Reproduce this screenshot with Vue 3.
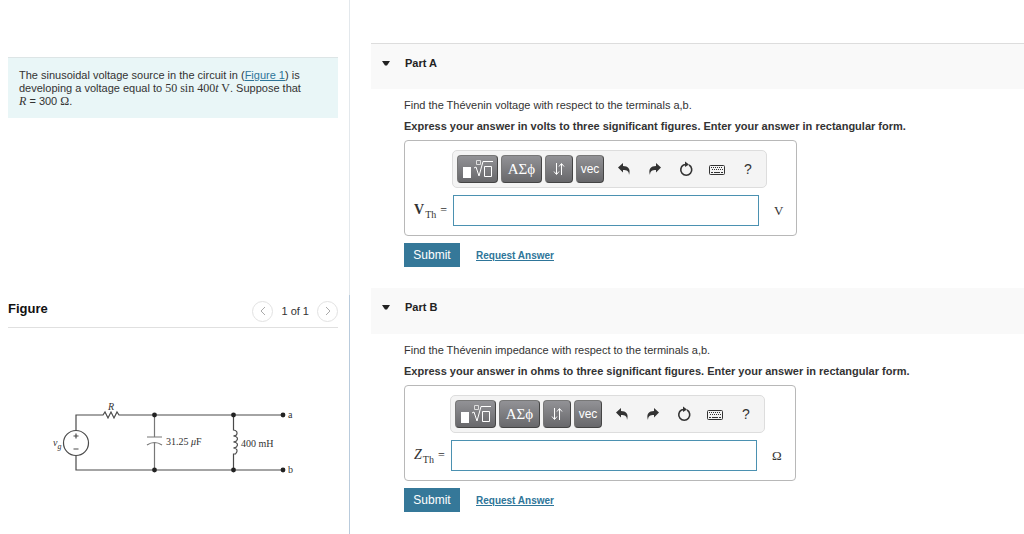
<script setup>
import { ref } from 'vue'

const parts = ref([
  {
    id: 'a', title: 'Part A', quantity: 'voltage', unitName: 'volts',
    symbol: 'V', vector: true, unit: 'V', answer: '', open: true
  },
  {
    id: 'b', title: 'Part B', quantity: 'impedance', unitName: 'ohms',
    symbol: 'Z', vector: false, unit: 'Ω', answer: '', open: true
  }
])
</script>

<template>
  <div class="page">
    <aside class="side">
      <section class="intro">
        <p>
          The sinusoidal voltage source in the circuit in (<a href="#figure">Figure 1</a>) is
          developing a voltage equal to <span class="math">50 sin 400<i>t</i> V</span>. Suppose that
          <span class="math"><i>R</i></span> = 300 <span class="math">Ω</span>.
        </p>
      </section>

      <section id="figure" class="figure">
        <header class="figure-head">
          <h2>Figure</h2>
          <nav class="pager" aria-label="Figures">
            <button type="button" aria-label="Previous figure">
              <svg width="8" height="10" viewBox="0 0 8 10"><path d="M6 1 2 5l4 4" /></svg>
            </button>
            <span>1 of 1</span>
            <button type="button" aria-label="Next figure">
              <svg width="8" height="10" viewBox="0 0 8 10"><path d="M2 1l4 4-4 4" /></svg>
            </button>
          </nav>
        </header>
        <svg class="circuit" width="250" height="84" viewBox="0 0 250 84" role="img" aria-label="Circuit diagram">
          <g fill="none" stroke="#4a4a4a" stroke-width="1.2">
            <path d="M26 34V18H53l2-3 3 6 3-6 3 6 3-6 2 3H233" />
            <path d="M26 59V73H233" />
            <circle cx="26" cy="46" r="12.5" />
            <path d="M23.500 39h5M26 36.500v5M23.500 52h5" />
            <path d="M104.500 18V40M97 40h15M97 48q7.500-5 15 0M104.500 46V73" stroke="#777" />
            <path d="M183.500 18V33q5 1 3 5l-3 1q6 1 3 5l-3 1q6 1 3 5l-3 1q6 1 2 6h-2V73" />
          </g>
          <g fill="#222">
            <circle cx="104.500" cy="18" r="2.400" /><circle cx="104.500" cy="73" r="2.400" />
            <circle cx="183.500" cy="18" r="2.400" /><circle cx="183.500" cy="73" r="2.400" />
            <circle cx="233" cy="18" r="2.400" /><circle cx="233" cy="73" r="2.400" />
          </g>
          <g class="circuit-text">
            <text x="58" y="13" font-style="italic">R</text>
            <text x="3" y="49" font-style="italic">v<tspan dy="3" font-size="8">g</tspan></text>
            <text x="116" y="48">31.25 <tspan font-style="italic">μ</tspan>F</text>
            <text x="191" y="50">400 mH</text>
            <text x="238" y="21">a</text>
            <text x="238" y="76">b</text>
          </g>
        </svg>
      </section>
    </aside>

    <main class="main">
      <section v-for="part in parts" :key="part.id" class="part">
        <header class="part-head">
          <button type="button" :aria-expanded="part.open" :aria-label="part.title" @click="part.open = !part.open">
            <svg width="8" height="5" viewBox="0 0 8 5"><path d="M0 0h8L5 4.500H3z" fill="#222" /></svg>
          </button>
          <h2>{{ part.title }}</h2>
        </header>
        <div v-if="part.open" class="part-body">
          <p>Find the Thévenin {{ part.quantity }} with respect to the terminals a,b.</p>
          <p class="strong">
            Express your answer in {{ part.unitName }} to three significant figures. Enter your answer in rectangular form.
          </p>
          <div class="answer">
            <div class="toolbar">
              <button type="button" class="key wide" aria-label="Templates">
                <svg width="32" height="20" viewBox="0 0 32 20" fill="none" stroke="#fff">
                  <path d="M1 8h8v11H1z" fill="#fff" stroke="none" />
                  <path d="M14.500 1.500h4v4h-4z" stroke="#ddd" />
                  <path d="M12 9l2-1 3 9 4-14.500h10" />
                  <path d="M22.500 7.500h7v10h-7z" />
                </svg>
              </button>
              <button type="button" class="key wide greek">ΑΣϕ</button>
              <button type="button" class="key" aria-label="Subscript and superscript">
                <svg width="12" height="14" viewBox="0 0 12 14" fill="none" stroke="#fff">
                  <path d="M3.500 1v11M1 9.500l2.500 3 2.500-3M8.500 13V2M6 4.500l2.500-3 2.500 3" />
                </svg>
              </button>
              <button type="button" class="key">vec</button>
              <button type="button" class="tool" aria-label="Undo">
                <svg width="14" height="14" viewBox="0 0 14 14">
                  <path d="M1 5.500 6 1v3c5 0 8 3 6 9 0-4-2-5-6-5v2.500z" fill="#333" />
                </svg>
              </button>
              <button type="button" class="tool" aria-label="Redo">
                <svg width="14" height="14" viewBox="0 0 14 14">
                  <path d="M13 5.500 8 1v3c-5 0-8 3-6 9 0-4 2-5 6-5v2.500z" fill="#333" />
                </svg>
              </button>
              <button type="button" class="tool" aria-label="Reset">
                <svg width="14" height="16" viewBox="0 0 14 16">
                  <path d="M10 4a5.500 5.500 0 1 1-5.500 0L7 3.500" fill="none" stroke="#333" stroke-width="1.600" />
                  <path d="M6 0.500 10 3.500 6 6z" fill="#333" />
                </svg>
              </button>
              <button type="button" class="tool" aria-label="Keyboard">
                <svg width="16" height="14" viewBox="0 0 16 14" fill="none" stroke="#333">
                  <rect x="0.500" y="3.500" width="15" height="9" rx="1" />
                  <path d="M2 5.500h12M3 7.500h11" stroke-dasharray="1 1" />
                  <path d="M2 10.500h2M5 10.500h6M12 10.500h2" />
                </svg>
              </button>
              <button type="button" class="tool help" aria-label="Help">?</button>
            </div>
            <label :for="'answer-' + part.id" class="symbol" :class="{ vector: part.vector }">
              <span class="letter">{{ part.symbol }}</span><span class="sub">Th</span><span class="eq">=</span>
            </label>
            <input :id="'answer-' + part.id" v-model="part.answer" type="text" class="field" autocomplete="off" />
            <span class="unit">{{ part.unit }}</span>
          </div>
          <div class="actions">
            <button type="button" class="submit">Submit</button>
            <a href="#request">Request Answer</a>
          </div>
        </div>
      </section>
    </main>
  </div>
</template>

<style>
body {
  background: #fff;
}
</style>

<style scoped>
.page {
  display: grid;
  grid-template-columns: minmax(0, 350px) minmax(0, 1fr);
  min-height: 100vh;
  color: #333;
  font: 11px/13px "Liberation Sans", Arial, sans-serif;
}
h2, p {
  margin: 0;
}
button {
  display: flex;
  align-items: center;
  justify-content: center;
  padding: 0;
  border: 0;
  background: none;
  color: inherit;
  font: inherit;
  cursor: pointer;
}
a {
  color: #2e7599;
}
.side {
  display: grid;
  grid-template-rows: 295px 1fr;
}
.intro {
  padding: 57px 11px 0 8px;
  border-right: 1px solid #e3e8ec;
}
.intro p {
  padding: 11px 30px 10px 11px;
  border-top: 1px solid #dde5e6;
  background: #e9f6f7;
}
.math {
  font: 12px/12px "Liberation Serif", serif;
}
.figure {
  padding: 0 11px 0 8px;
  border-right: 1px solid #b9cbdc;
}
.figure-head {
  display: flex;
  align-items: center;
  justify-content: space-between;
  height: 32px;
  border-bottom: 1px solid #e0e0e0;
}
.figure-head h2 {
  padding-bottom: 4px;
  color: #111;
  font-size: 13px;
  line-height: 16px;
}
.pager {
  display: flex;
  align-items: center;
  gap: 8px;
}
.pager button {
  width: 21px;
  height: 21px;
  border: 1px solid #e2e2e2;
  border-radius: 50%;
}
.pager path {
  fill: none;
  stroke: #aaa;
}
.circuit {
  display: block;
  margin: 69px 0 0 42px;
}
.circuit-text {
  fill: #333;
  font: 10px "Liberation Serif", serif;
}
.main {
  padding: 43px 0 0 21px;
}
.part {
  min-height: 245px;
}
.part-head {
  display: flex;
  align-items: center;
  gap: 15px;
  box-sizing: border-box;
  height: 46px;
  padding: 0 11px 7px;
  background: #f9f9f9;
}
.part:first-child .part-head {
  border-top: 1px solid #ddd;
}
.part-head h2 {
  color: #222;
  font-size: 11px;
  line-height: 13px;
}
.part-body {
  padding: 10px 33px 0;
}
.strong {
  margin: 8px 0 7px;
  font-weight: bold;
}
.answer {
  display: grid;
  grid-template-columns: 38px 315px auto;
  align-items: center;
  row-gap: 7px;
  width: max-content;
  padding: 9px 13px 9px 9px;
  border: 1px solid #b8b8b8;
  border-radius: 4px;
}
.part:last-child .answer {
  grid-template-columns: 36px 315px auto;
}
.toolbar {
  grid-column: 2;
  display: flex;
  align-items: center;
  gap: 3px;
  box-sizing: border-box;
  height: 38px;
  padding: 0 4px;
  border: 1px solid #ddd;
  border-radius: 5px;
  background: #f4f4f4;
}
.key {
  box-sizing: border-box;
  width: 28px;
  height: 28px;
  border: 1px solid #444;
  border-top-color: #777;
  border-left-color: #777;
  border-radius: 4px;
  background: linear-gradient(#929296, #68686b);
  color: #fff;
  font-size: 12px;
}
.wide {
  width: 41px;
}
.greek {
  font: 15px/18px "Liberation Serif", serif;
}
.tool {
  width: 28px;
  height: 28px;
}
.key + .tool {
  margin-left: 3px;
}
.help {
  font-size: 14px;
}
.symbol {
  grid-column: 1;
  font: 14px/18px "Liberation Serif", serif;
  white-space: nowrap;
}
.letter {
  font-style: italic;
}
.vector .letter {
  font-style: normal;
  font-weight: bold;
}
.sub {
  padding: 0 4px 0 1px;
  font-size: 10px;
  line-height: 10px;
  vertical-align: sub;
}
.eq {
  font-size: 12px;
}
.field {
  box-sizing: border-box;
  width: 306px;
  height: 31px;
  margin: 0 0 0 1px;
  padding: 0 6px;
  border: 1px solid #4b91b1;
  background: #fff;
  font: inherit;
  outline: 0;
}
.unit {
  padding-left: 7px;
  font: 13px/16px "Liberation Serif", serif;
}
.actions {
  display: flex;
  align-items: center;
  gap: 16px;
  padding-top: 7px;
}
.submit {
  width: 56px;
  height: 24px;
  background: #357899;
  color: #fff;
  font-size: 12px;
}
.actions a {
  font-size: 10px;
  font-weight: bold;
}
</style>
